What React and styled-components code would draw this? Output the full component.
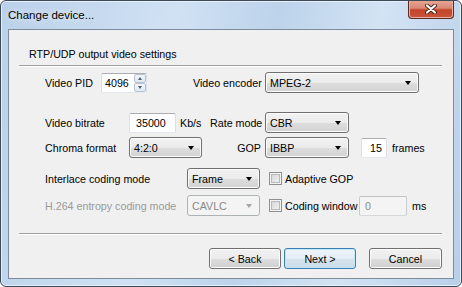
import React from 'react';
import styled, { createGlobalStyle } from 'styled-components';

const GlobalStyle = createGlobalStyle`
  body {
    margin: 0;
    background: #ffffff;
    font-family: "Liberation Sans", Arial, sans-serif;
    font-size: 10.7px;
    color: #000000;
  }
`;

const Window = styled.div`
  box-sizing: border-box;
  width: 462px;
  height: 287px;
  display: flex;
  flex-direction: column;
  border: 1px solid #3d4a58;
  border-radius: 6px;
  overflow: hidden;
  background: linear-gradient(100deg, #bad1ea 0%, #d0e1f3 35%, #bcd3eb 55%, #d3e3f4 75%, #b8cfe9 100%);
  box-shadow: inset 0 0 0 1px #e6f0fa;
`;

const TitleBar = styled.div`
  height: 28px;
  flex-shrink: 0;
  display: flex;
  align-items: flex-start;
  justify-content: space-between;
  padding-left: 7px;
`;

const Title = styled.span`
  font-size: 11.5px;
  line-height: 28px;
  color: #000000;
  text-shadow: 0 0 6px #ffffff;
`;

const CloseButton = styled.div`
  box-sizing: border-box;
  width: 46px;
  height: 19px;
  margin-top: -1px;
  margin-right: 7px;
  display: flex;
  align-items: center;
  justify-content: center;
  border: 1px solid #5a2a20;
  border-top: none;
  border-radius: 0 0 4px 4px;
  background: linear-gradient(#e7a797 0%, #d98a75 45%, #c3442b 55%, #c9553b 100%);
  box-shadow: inset 0 0 0 1px #e9b1a2;
`;

const Client = styled.div`
  box-sizing: border-box;
  height: 250px;
  margin: 0 7px;
  display: flex;
  flex-direction: column;
  padding: 0 11px 0 10px;
  border: 1px solid #7c8c9d;
  background: #f0f0f0;
`;

const GroupTitle = styled.div`
  margin-top: 17px;
  padding-left: 10px;
  line-height: 14px;
`;

const Separator = styled.div`
  margin-top: ${(p) => p.$mt}px;
  border-top: 1px solid #a0a0a0;
  border-bottom: 1px solid #ffffff;
`;

const Row = styled.div`
  display: flex;
  align-items: center;
  height: 21px;
  margin-top: ${(p) => p.$mt}px;
  padding-left: 26px;
  white-space: nowrap;
`;

const Label = styled.span`
  flex-shrink: 0;
  box-sizing: border-box;
  width: ${(p) => (p.$w ? `${p.$w}px` : 'auto')};
  margin-left: ${(p) => p.$ml || 0}px;
  padding-right: ${(p) => p.$pr || 0}px;
  text-align: ${(p) => p.$align || 'left'};
  color: ${(p) => (p.$disabled ? '#9a9a9a' : '#000000')};
`;

const TextBox = styled.input`
  box-sizing: border-box;
  flex-shrink: 0;
  width: ${(p) => p.$w}px;
  height: 20px;
  margin: 0 0 0 ${(p) => p.$ml || 0}px;
  padding: 0 0 0 ${(p) => p.$pl || 4}px;
  font: inherit;
  color: ${(p) => (p.disabled ? '#8d8d8d' : '#000000')};
  text-align: ${(p) => p.$align || 'left'};
  background: ${(p) => (p.disabled ? '#f4f4f4' : '#ffffff')};
  border: 1px solid ${(p) => (p.disabled ? '#c9cbce' : '#dbdfe6')};
  border-top-color: ${(p) => (p.disabled ? '#bfc1c4' : '#abadb3')};
  border-bottom-color: ${(p) => (p.disabled ? '#d6d8da' : '#e3e9ef')};
  border-radius: 2px;
  outline: none;
`;

const Spin = styled.div`
  box-sizing: border-box;
  flex-shrink: 0;
  display: flex;
  width: 46px;
  height: 20px;
  background: #ffffff;
  border: 1px solid #dbdfe6;
  border-top-color: #abadb3;
  border-bottom-color: #e3e9ef;
  border-radius: 2px;
`;

const SpinValue = styled.span`
  flex: 1;
  padding-left: 3px;
  line-height: 18px;
`;

const SpinButtons = styled.div`
  display: flex;
  flex-direction: column;
  width: 12px;
`;

const SpinArrow = styled.div`
  flex: 1;
  display: flex;
  align-items: center;
  justify-content: center;
  border: 1px solid #b8c3d0;
  border-radius: 2px;
  background: linear-gradient(#f3f6fa, #dfe7f1);
`;

const Tri = styled.span`
  width: 0;
  height: 0;
  border-left: ${(p) => p.$size}px solid transparent;
  border-right: ${(p) => p.$size}px solid transparent;
  border-top: ${(p) => (p.$up ? 0 : `${p.$h}px solid ${p.$color}`)};
  border-bottom: ${(p) => (p.$up ? `${p.$h}px solid ${p.$color}` : 0)};
`;

const Combo = styled.div`
  box-sizing: border-box;
  flex-shrink: 0;
  display: flex;
  align-items: center;
  width: ${(p) => p.$w}px;
  height: 21px;
  padding-left: 4px;
  color: ${(p) => (p.$disabled ? '#8a8a8a' : '#000000')};
  border: 1px solid ${(p) => (p.$disabled ? '#adb2b5' : '#707070')};
  border-radius: 3px;
  background: ${(p) =>
    p.$disabled
      ? '#f4f4f4'
      : 'linear-gradient(#f2f2f2 0%, #ebebeb 50%, #dddddd 51%, #d3d3d3 100%)'};
  box-shadow: inset 0 0 0 1px ${(p) => (p.$disabled ? '#f4f4f4' : '#fbfbfb')};
`;

const ComboArrow = styled.span`
  margin-left: auto;
  margin-right: 7px;
  display: flex;
`;

const Check = styled.span`
  box-sizing: border-box;
  flex-shrink: 0;
  width: 13px;
  height: 13px;
  margin-left: ${(p) => p.$ml}px;
  margin-right: 3px;
  border: 1px solid #8e8f8f;
  background: linear-gradient(135deg, #d2d2d2 0%, #f6f6f6 100%);
  box-shadow: inset 0 0 0 1px #f4f4f4, inset 0 0 0 2px #b6babf;
`;

const ButtonBar = styled.div`
  display: flex;
  justify-content: flex-end;
  margin-top: 13px;
`;

const DialogButton = styled.button`
  box-sizing: border-box;
  width: ${(p) => p.$w}px;
  height: 21px;
  margin-left: ${(p) => p.$ml}px;
  padding: 0;
  font: inherit;
  color: #000000;
  border: 1px solid ${(p) => (p.$default ? '#3c7fb1' : '#707070')};
  border-radius: 3px;
  background: ${(p) =>
    p.$default
      ? 'linear-gradient(#eef5fa 0%, #e4eef5 50%, #d6e4ee 51%, #cbdce8 100%)'
      : 'linear-gradient(#f2f2f2 0%, #ebebeb 50%, #dddddd 51%, #cfcfcf 100%)'};
  box-shadow: inset 0 0 0 1px ${(p) => (p.$default ? '#bfe6f9' : '#fcfcfc')};
`;

const CloseGlyph = () => (
  <svg width="12" height="10" viewBox="0 0 12 10">
    <path d="M2 1.5 L10 8.5 M10 1.5 L2 8.5" stroke="#4a2018" strokeWidth="4" strokeLinecap="round" />
    <path d="M2 1.5 L10 8.5 M10 1.5 L2 8.5" stroke="#ffffff" strokeWidth="2.2" strokeLinecap="round" />
  </svg>
);

const Dropdown = ({ w, value, disabled }) => (
  <Combo $w={w} $disabled={disabled}>
    {value}
    <ComboArrow>
      <Tri $size={3.5} $h={4} $color={disabled ? '#a6a6a6' : '#000000'} />
    </ComboArrow>
  </Combo>
);

export default function App() {
  return (
    <>
      <GlobalStyle />
      <Window>
        <TitleBar>
          <Title>Change device...</Title>
          <CloseButton>
            <CloseGlyph />
          </CloseButton>
        </TitleBar>
        <Client>
          <GroupTitle>RTP/UDP output video settings</GroupTitle>
          <Separator $mt={4} />

          <Row $mt={5}>
            <Label $w={56}>Video PID</Label>
            <Spin>
              <SpinValue>4096</SpinValue>
              <SpinButtons>
                <SpinArrow>
                  <Tri $up $size={2.5} $h={3} $color="#4c607a" />
                </SpinArrow>
                <SpinArrow>
                  <Tri $size={2.5} $h={3} $color="#4c607a" />
                </SpinArrow>
              </SpinButtons>
            </Spin>
            <Label $ml={46} $w={72}>Video encoder</Label>
            <Dropdown w={154} value="MPEG-2" />
          </Row>

          <Row $mt={19}>
            <Label $w={84}>Video bitrate</Label>
            <TextBox $w={47} $pl={6} defaultValue="35000" readOnly />
            <Label $ml={4} $w={30}>Kb/s</Label>
            <Label $w={55}>Rate mode</Label>
            <Dropdown w={84} value="CBR" />
          </Row>

          <Row $mt={4}>
            <Label $w={84}>Chroma format</Label>
            <Dropdown w={73} value="4:2:0" />
            <Label $w={63} $align="right" $pr={4}>GOP</Label>
            <Dropdown w={84} value="IBBP" />
            <TextBox $ml={12} $w={26} $pl={0} $align="center" defaultValue="15" readOnly />
            <Label $ml={5}>frames</Label>
          </Row>

          <Row $mt={10}>
            <Label $w={142}>Interlace coding mode</Label>
            <Dropdown w={73} value="Frame" />
            <Check $ml={9} />
            <Label>Adaptive GOP</Label>
          </Row>

          <Row $mt={6}>
            <Label $w={142} $disabled>H.264 entropy coding mode</Label>
            <Dropdown w={73} value="CAVLC" disabled />
            <Check $ml={9} />
            <Label $w={74}>Coding window</Label>
            <TextBox $w={48} $pl={5} defaultValue="0" disabled />
            <Label $ml={5}>ms</Label>
          </Row>

          <Separator $mt={17} />

          <ButtonBar>
            <DialogButton $w={72} $ml={0}>&lt; Back</DialogButton>
            <DialogButton $w={72} $ml={3} $default>Next &gt;</DialogButton>
            <DialogButton $w={73} $ml={13}>Cancel</DialogButton>
          </ButtonBar>
        </Client>
      </Window>
    </>
  );
}
